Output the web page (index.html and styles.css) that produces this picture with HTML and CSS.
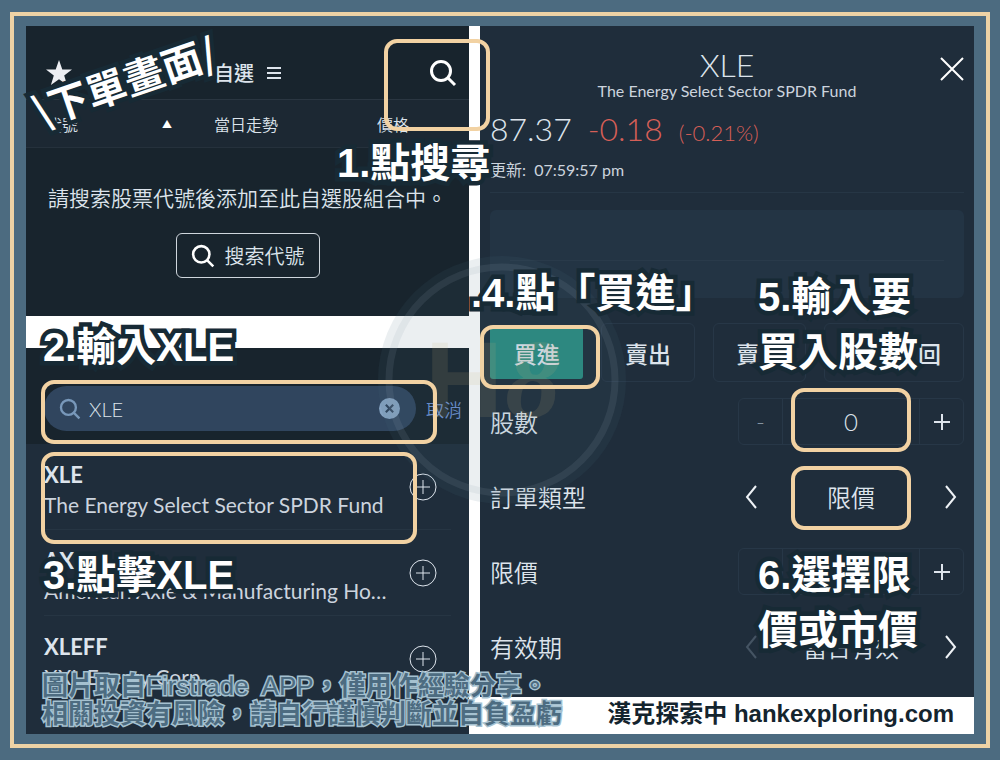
FILE: index.html
```html
<!DOCTYPE html>
<html lang="zh-Hant">
<head>
  <meta charset="UTF-8" />
  <meta name="viewport" content="width=device-width, initial-scale=1" />
  <title>下單畫面</title>
  <link rel="stylesheet" href="styles.css">
</head>
<body>
  <main class="frame">
    <div class="stage">

      <div class="left-column">
        <!-- Watchlist -->
        <section class="watchlist">
          <header class="watch-header">
            <svg class="star" viewBox="0 0 26 26"><path d="M13 0l3.3 9.4H26l-7.8 6 2.9 9.6L13 19.2 4.900 25l2.900-9.600L0 9.400h9.700z"/></svg>
            <h2>自選</h2>
            <svg class="menu" viewBox="0 0 14 12"><path d="M0 1h14M0 6h14M0 11h14"/></svg>
            <button class="icon-button" aria-label="搜尋">
              <svg viewBox="0 0 28 28"><circle cx="12" cy="12" r="9.500"/><path d="M19 19l7 7"/></svg>
            </button>
          </header>
          <div class="watch-columns">
            <span>代號</span>
            <span class="sort">▲</span>
            <span>當日走勢</span>
            <span class="price-column">價格</span>
          </div>
          <div class="empty">
            <p>請搜索股票代號後添加至此自選股組合中。</p>
            <button class="search-button">
              <svg viewBox="0 0 28 28"><circle cx="12" cy="12" r="9.500"/><path d="M19 19l7 7"/></svg>
              搜索代號
            </button>
          </div>
        </section>

        <!-- Symbol search -->
        <section class="search">
          <div class="search-top">
            <label class="search-box">
              <svg class="search-icon" viewBox="0 0 28 28"><circle cx="12" cy="12" r="9.500"/><path d="M19 19l7 7"/></svg>
              <input type="text" value="XLE" aria-label="搜索代號">
              <button class="clear" aria-label="清除">
                <svg viewBox="0 0 20 20"><circle cx="10" cy="10" r="10"/><path d="M6.500 6.500l7 7M13.500 6.500l-7 7"/></svg>
              </button>
            </label>
            <a href="#" class="cancel">取消</a>
          </div>
          <ul class="results">
            <li>
              <div class="result-text"><strong>XLE</strong><span>The Energy Select Sector SPDR Fund</span></div>
              <button class="add" aria-label="添加 XLE"><svg viewBox="0 0 28 28"><circle cx="14" cy="14" r="13"/><path d="M14 7v14M7 14h14"/></svg></button>
            </li>
            <li>
              <div class="result-text"><strong>AXL</strong><span>American Axle &amp; Manufacturing Ho…</span></div>
              <button class="add" aria-label="添加 AXL"><svg viewBox="0 0 28 28"><circle cx="14" cy="14" r="13"/><path d="M14 7v14M7 14h14"/></svg></button>
            </li>
            <li>
              <div class="result-text"><strong>XLEFF</strong><span>XXL Energy Corp.</span></div>
              <button class="add" aria-label="添加 XLEFF"><svg viewBox="0 0 28 28"><circle cx="14" cy="14" r="13"/><path d="M14 7v14M7 14h14"/></svg></button>
            </li>
          </ul>
        </section>
      </div>

      <div class="right-column">
        <!-- Order ticket -->
        <section class="ticket">
          <header class="ticket-header">
            <h1>XLE</h1>
            <p>The Energy Select Sector SPDR Fund</p>
            <button class="close" aria-label="關閉">
              <svg viewBox="0 0 24 24"><path d="M1 1l22 22M23 1L1 23"/></svg>
            </button>
          </header>
          <div class="quote">
            <span>87.37</span>
            <span class="down">-0.18</span>
            <span class="down percent">(-0.21%)</span>
          </div>
          <p class="updated">更新:&nbsp; 07:59:57 pm</p>
          <div class="chart"></div>
          <div class="sides">
            <button class="buy">買進</button>
            <button>賣出</button>
            <button>賣空</button>
            <button class="cover">買回</button>
          </div>
          <form class="order">
            <div class="row">
              <label for="qty">股數</label>
              <div class="stepper">
                <button type="button" class="dim">-</button>
                <input id="qty" type="text" value="0">
                <button type="button" aria-label="增加"><svg class="plus" viewBox="0 0 18 18"><path d="M9 1v16M1 9h16"/></svg></button>
              </div>
            </div>
            <div class="row">
              <span>訂單類型</span>
              <div class="picker">
                <button type="button" aria-label="上一個"><svg viewBox="0 0 12 24"><path d="M11 1L2 12l9 11"/></svg></button>
                <output>限價</output>
                <button type="button" aria-label="下一個"><svg viewBox="0 0 12 24"><path d="M1 1l9 11-9 11"/></svg></button>
              </div>
            </div>
            <div class="row">
              <label for="limit">限價</label>
              <div class="stepper">
                <button type="button" class="dim" aria-label="減少"></button>
                <input id="limit" type="text">
                <button type="button" aria-label="增加"><svg class="plus" viewBox="0 0 18 18"><path d="M9 1v16M1 9h16"/></svg></button>
              </div>
            </div>
            <div class="row">
              <span>有效期</span>
              <div class="picker">
                <button type="button" class="dim" aria-label="上一個"><svg viewBox="0 0 12 24"><path d="M11 1L2 12l9 11"/></svg></button>
                <output>當日有效</output>
                <button type="button" aria-label="下一個"><svg viewBox="0 0 12 24"><path d="M1 1l9 11-9 11"/></svg></button>
              </div>
            </div>
          </form>
        </section>
        <footer class="credit">漢克探索中 hankexploring.com</footer>
      </div>

      <!-- Watermark -->
      <svg class="watermark" viewBox="0 0 248 248">
        <circle class="disc" cx="124" cy="124" r="124"/>
        <circle class="ring" cx="124" cy="124" r="113"/>
        <text x="47" y="161">H</text>
        <text class="script" x="127" y="161">8</text>
      </svg>

      <!-- Highlight boxes -->
      <div class="highlight mark-search"></div>
      <div class="highlight mark-input"></div>
      <div class="highlight mark-result"></div>
      <div class="highlight mark-buy"></div>
      <div class="highlight mark-qty"></div>
      <div class="highlight mark-type"></div>

      <!-- Step captions -->
      <p class="caption caption-title">\下單畫面/</p>
      <p class="caption step-1">1.點搜尋</p>
      <p class="caption step-2">2.輸入XLE</p>
      <p class="caption step-3">3.點擊XLE</p>
      <p class="caption step-4">.4.點「買進」</p>
      <p class="caption step-5">5.輸入要<br>買入股數</p>
      <p class="caption step-6">6.選擇限<br>價或市價</p>

      <p class="notice">圖片取自<span>Firstrade&nbsp; APP</span>，僅用作經驗分享。<br>相關投資有風險，請自行謹慎判斷並自負盈虧</p>
    </div>
  </main>
</body>
</html>
```

FILE: styles.css
```css
* {
  box-sizing: border-box;
}

body {
  margin: 0;
  min-height: 100vh;
  padding: 12px 10px;
  display: flex;
  background: #4c6b80;
  color: #dde4ec;
  font-family: Lato, "Noto Sans CJK TC", sans-serif;
  font-weight: 350;
}

h1, h2, p, ul {
  margin: 0;
  padding: 0;
  font-weight: inherit;
}

button, input {
  font: inherit;
  color: inherit;
  background: none;
  border: none;
  padding: 0;
  margin: 0;
  min-width: 0;
}

button {
  cursor: pointer;
}

svg {
  display: block;
  fill: none;
  stroke: currentColor;
}

.frame {
  flex: 1;
  display: flex;
  border: 4px solid #edd2a5;
  padding: 10px 12px;
}

.stage {
  position: relative;
  flex: 1;
  display: grid;
  grid-template-columns: 443fr 494fr;
  gap: 11px;
  background: #fff;
}

.left-column, .right-column {
  display: flex;
  flex-direction: column;
  min-width: 0;
}

.left-column {
  gap: 32px;
}

/* Watchlist */
.watchlist {
  background: #18242d;
  padding-bottom: 38px;
}

.watch-header {
  display: flex;
  align-items: center;
  height: 74px;
  padding: 20px 12px 0 20px;
  border-bottom: 1px solid #2a3641;
}

.watch-header h2 {
  margin-left: 142px;
  font-size: 20px;
  font-weight: 500;
  line-height: 24px;
}

.star {
  width: 26px;
  fill: #eceef2;
  stroke: none;
}

.menu {
  width: 14px;
  margin-left: 13px;
  stroke-width: 2;
}

.icon-button {
  margin-left: auto;
  color: #fff;
}

.icon-button svg {
  width: 28px;
  stroke-width: 3;
}

.watch-columns {
  display: flex;
  align-items: center;
  height: 48px;
  padding: 0 60px 0 20px;
  background: #1c2833;
  border-bottom: 1px solid #25313c;
  font-size: 16px;
}

.sort {
  width: 52px;
  margin-left: 84px;
  font-size: 10px;
  color: #fff;
}

.price-column {
  margin-left: auto;
}

.empty {
  display: flex;
  flex-direction: column;
  align-items: center;
  padding-top: 35px;
  gap: 20px;
}

.empty p {
  font-size: 21px;
  line-height: 30px;
  white-space: nowrap;
}

.search-button {
  display: flex;
  align-items: center;
  gap: 10px;
  height: 45px;
  padding: 0 14px;
  border: 1px solid #cfd6dd;
  border-radius: 6px;
  font-size: 20px;
}

.search-button svg {
  width: 24px;
  stroke: #fff;
  stroke-width: 3;
}

/* Symbol search */
.search {
  flex: 1;
  background: #1f2d3b;
}

.search-top {
  display: flex;
  align-items: center;
  gap: 10px;
  padding: 38px 7px 13px 18px;
  background: #18242d;
}

.search-box {
  flex: 1;
  display: flex;
  align-items: center;
  gap: 8px;
  height: 45px;
  padding: 0 16px 0 15px;
  border-radius: 23px;
  background: #30455e;
}

.search-box input {
  flex: 1;
  width: 0;
  font-size: 20px;
}

.search-icon {
  width: 22px;
  color: #7898ba;
  stroke-width: 3;
}

.clear svg {
  width: 21px;
  stroke: #2d435c;
  stroke-width: 2;
}

.clear circle {
  fill: #86a4c3;
  stroke: none;
}

.cancel {
  color: #6b90d2;
  font-size: 18px;
  text-decoration: none;
}

.results {
  list-style: none;
  padding: 0 18px;
}

.results li {
  display: flex;
  align-items: center;
  justify-content: space-between;
  height: 86px;
  padding-right: 14px;
  border-bottom: 1px solid #263543;
}

.results li:last-child {
  border-bottom: none;
}

.result-text {
  display: flex;
  flex-direction: column;
  padding-top: 6px;
  font-size: 21px;
  font-weight: 400;
  line-height: 30px;
  white-space: nowrap;
  color: #ccd4de;
}

.result-text strong {
  font-size: 22px;
  font-weight: 700;
  color: #dde4ec;
}

.add {
  flex: none;
}

.add svg {
  width: 28px;
  stroke-width: 1;
}

/* Order ticket */
.ticket {
  flex: 1;
  padding: 20px 10px 0;
  background: #1f2d3b;
}

.ticket-header {
  position: relative;
  text-align: center;
}

.ticket-header h1 {
  font-size: 32px;
  line-height: 37px;
}

.ticket-header p {
  font-size: 16px;
  font-weight: 400;
  line-height: 16px;
  color: #ccd4de;
}

.close {
  position: absolute;
  top: 11px;
  right: 0;
  color: #fff;
}

.close svg {
  width: 24px;
  stroke-width: 2;
}

.quote {
  display: flex;
  align-items: baseline;
  gap: 16px;
  margin-top: 10px;
  font-size: 32px;
  line-height: 40px;
}

.down {
  color: #d65f57;
}

.percent {
  font-size: 22px;
}

.updated {
  margin-top: 7px;
  padding-bottom: 12px;
  border-bottom: 1px solid #263645;
  font-size: 16px;
  font-weight: 400;
  line-height: 20px;
  color: #ccd4de;
}

.chart {
  height: 88px;
  margin-top: 17px;
  border-radius: 6px;
  background: #233444;
}

.chart::before {
  content: "";
  display: block;
  height: 50px;
  margin: 0 20px;
  border-bottom: 1px solid #293a4a;
}

.sides {
  display: grid;
  grid-template-columns: 2fr 2fr 2fr 3fr;
  align-items: center;
  gap: 18px;
  margin-top: 25px;
}

.sides button {
  height: 59px;
  border: 1px solid #273747;
  border-radius: 6px;
  font-size: 23px;
  font-weight: 500;
}

.sides .buy {
  height: 52px;
  border: none;
  border-radius: 3px;
  background: #2a8c80;
}

.sides .cover {
  padding-left: 48px;
}

.order {
  margin-top: 2px;
}

.row {
  display: flex;
  align-items: center;
  justify-content: space-between;
  height: 75px;
  font-size: 24px;
}

.stepper, .picker {
  display: flex;
  width: 226px;
  height: 47px;
}

.stepper {
  border: 1px solid #273747;
  border-radius: 6px;
}

.stepper button {
  width: 43px;
  display: flex;
  align-items: center;
  justify-content: center;
}

.stepper input {
  flex: 1;
  text-align: center;
  border: 1px solid #273747;
  border-width: 0 1px;
}

.plus {
  width: 18px;
  stroke-width: 2;
}

.stepper .dim {
  color: #8492a0;
}

.picker {
  align-items: center;
  justify-content: space-between;
  padding: 0 7px;
}

.picker button {
  color: #eef2f6;
}

.picker .dim {
  color: #455463;
}

.picker svg {
  width: 12px;
  stroke-width: 2;
}

.credit {
  height: 37px;
  padding-right: 20px;
  text-align: right;
  white-space: nowrap;
  color: #14242e;
  font-family: "Liberation Sans", "Noto Sans CJK TC", sans-serif;
  font-size: 24px;
  font-weight: 700;
  line-height: 34px;
}

/* Watermark */
.watermark {
  position: absolute;
  left: 352px;
  top: 230px;
  width: 248px;
  stroke: none;
  pointer-events: none;
}

.watermark .disc {
  fill: rgba(75, 105, 125, 0.11);
}

.watermark .ring {
  stroke: rgba(150, 165, 175, 0.13);
  stroke-width: 7;
}

.watermark text {
  fill: rgba(200, 175, 120, 0.13);
  font-family: "Liberation Sans", sans-serif;
  font-size: 108px;
  font-weight: 700;
}

.watermark .script {
  font-family: "Liberation Serif", serif;
  font-style: italic;
  font-size: 112px;
}

/* Highlight boxes */
.highlight {
  position: absolute;
  border: 4px solid #f2d2a3;
  border-radius: 13px;
  pointer-events: none;
}

.mark-search {
  left: 358px;
  top: 13px;
  width: 106px;
  height: 92px;
}

.mark-input {
  left: 15px;
  top: 354px;
  width: 396px;
  height: 64px;
}

.mark-result {
  left: 15px;
  top: 426px;
  width: 376px;
  height: 92px;
}

.mark-buy {
  left: 454px;
  top: 299px;
  width: 120px;
  height: 64px;
}

.mark-qty, .mark-type {
  right: 63px;
  width: 120px;
  height: 64px;
}

.mark-qty {
  top: 362px;
}

.mark-type {
  top: 440px;
}

/* Step captions */
.caption {
  position: absolute;
  color: #fff;
  font-family: "Liberation Sans", "Noto Sans CJK TC", sans-serif;
  font-size: 40px;
  font-weight: 700;
  line-height: 55px;
  white-space: nowrap;
  -webkit-text-stroke: 9px #172a35;
  paint-order: stroke fill;
  stroke-linejoin: round;
}

.caption-title {
  left: 3px;
  top: 27px;
  font-family: "Noto Sans CJK TC", sans-serif;
  transform: rotate(-19deg);
}

.step-1 {
  left: 311px;
  top: 110px;
}

.step-2 {
  left: 17px;
  top: 294px;
}

.step-3 {
  left: 17px;
  top: 522px;
}

.step-4 {
  left: 445px;
  top: 240px;
}

.step-5 {
  right: 56px;
  top: 244px;
}

.step-6 {
  right: 56px;
  top: 522px;
}

.notice {
  position: absolute;
  left: 16px;
  bottom: 6px;
  color: #4d6c81;
  font-family: "Liberation Sans", "Noto Sans CJK TC", sans-serif;
  font-size: 26px;
  font-weight: 700;
  line-height: 28px;
  white-space: nowrap;
  -webkit-text-stroke: 3px #a5c1d0;
  paint-order: stroke fill;
}

.notice span {
  font-weight: 400;
}
```
